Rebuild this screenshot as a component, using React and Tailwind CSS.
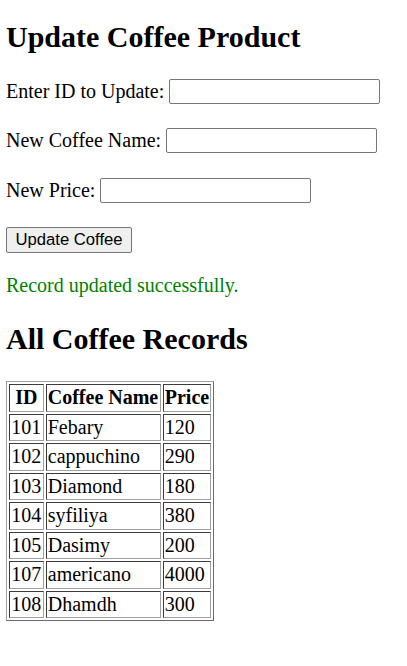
import React from "react";

const coffees = [
    { id: 101, name: "Febary", price: 120 },
    { id: 102, name: "cappuchino", price: 290 },
    { id: 103, name: "Diamond", price: 180 },
    { id: 104, name: "syfiliya", price: 380 },
    { id: 105, name: "Dasimy", price: 200 },
    { id: 107, name: "americano", price: 4000 },
    { id: 108, name: "Dhamdh", price: 300 },
];

const inputClass =
    "w-[211px] h-[25px] border border-[#767676] rounded-[2px] bg-white px-[2px] text-[16.67px] font-['Liberation_Sans',Arial,sans-serif] outline-none";

const cellClass =
    "border border-t-[#3b3b3b] border-l-[#3b3b3b] border-r-[#a0a0a0] border-b-[#a0a0a0] px-[1.25px] py-[1.25px] leading-[23px]";

function Field({ label, top = "mt-[25px]" }) {
    return (
        <div className={`flex items-center gap-[5px] h-[25px] ${top}`}>
            <label className="leading-[23px]">{label}</label>
            <input type="text" className={inputClass} />
        </div>
    );
}

export default function App() {
    return (
        <div className="pl-[6px] text-black bg-white min-h-[666px] font-['Liberation_Serif','Times_New_Roman',serif] text-[20px]">
            <div className="flex flex-col items-start">
                <h2 className="mt-[20px] text-[30px] font-bold leading-[34px]">
                    Update Coffee Product
                </h2>

                <form className="flex flex-col items-start">
                    <Field label="Enter ID to Update:" />
                    <Field label="New Coffee Name:" top="mt-[24px]" />
                    <Field label="New Price:" />

                    <button
                        type="button"
                        className="mt-[24px] h-[26px] w-[126px] border border-[#767676] rounded-[2px] bg-[#efefef] text-[16.67px] leading-[20px] font-['Liberation_Sans',Arial,sans-serif] text-black"
                    >
                        Update Coffee
                    </button>
                </form>

                <p className="mt-[21px] leading-[23px] text-[#008000]">
                    Record updated successfully.
                </p>

                <h2 className="mt-[25px] text-[30px] font-bold leading-[34px]">
                    All Coffee Records
                </h2>

                {/* 一覧テーブル */}
                <table className="mt-[25px] border-separate border-spacing-[2px] border border-t-[#a0a0a0] border-l-[#a0a0a0] border-r-[#6b6b6b] border-b-[#6b6b6b]">
                    <thead>
                        <tr>
                            <th className={`${cellClass} font-bold text-center`}>ID</th>
                            <th className={`${cellClass} font-bold text-center`}>Coffee Name</th>
                            <th className={`${cellClass} font-bold text-center`}>Price</th>
                        </tr>
                    </thead>
                    <tbody>
                        {coffees.map((c) => (
                            <tr key={c.id}>
                                <td className={`${cellClass} text-left`}>{c.id}</td>
                                <td className={`${cellClass} text-left`}>{c.name}</td>
                                <td className={`${cellClass} text-left`}>{c.price}</td>
                            </tr>
                        ))}
                    </tbody>
                </table>
            </div>
        </div>
    );
}
